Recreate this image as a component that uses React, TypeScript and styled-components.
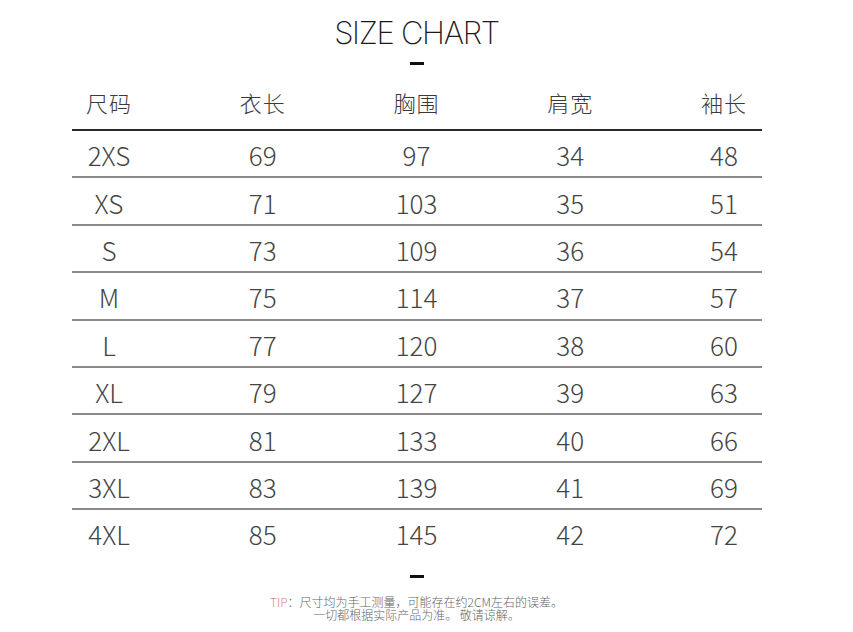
import React from "react";
import styled, { createGlobalStyle } from "styled-components";

const Global = createGlobalStyle`
  html, body { margin: 0; padding: 0; background: #fff; }
  body { width: 853px; height: 632px; overflow: hidden; }
`;

const Page = styled.div`
  width: 853px;
  height: 632px;
  box-sizing: border-box;
  padding-right: 20px;
  display: flex;
  flex-direction: column;
  align-items: center;
  background: #fff;
`;

const Title = styled.h1`
  margin: 15px 0 0 0;
  font-family: Inter, "Noto Sans", sans-serif;
  font-weight: 200;
  font-size: 31px;
  line-height: 36px;
  letter-spacing: -1.3px;
  color: #1a1a1a;
`;

const Dash = styled.div<{ $top: number }>`
  width: 14px;
  height: 3px;
  background: #111;
  margin-top: ${(p) => p.$top}px;
`;

const Table = styled.div`
  width: 690px;
  margin-top: 14px;
  display: flex;
  flex-direction: column;
  font-family: "Noto Sans CJK SC", "Noto Sans", sans-serif;
  font-weight: 200;
`;

const Row = styled.div<{ $head?: boolean; $last?: boolean }>`
  display: grid;
  grid-template-columns: repeat(5, 153.75px);
  justify-content: center;
  align-items: center;
  box-sizing: border-box;
  height: ${(p) => (p.$head ? "52px" : "47.4px")};
  padding-top: ${(p) => (p.$head ? "0" : "3px")};
  padding-bottom: ${(p) => (p.$head ? "4px" : "0")};
  border-bottom: ${(p) =>
    p.$last ? "2px solid transparent" : p.$head ? "2px solid #2a2a2a" : "2px solid #8a8a8a"};
`;

const Cell = styled.div<{ $head?: boolean }>`
  text-align: center;
  font-size: ${(p) => (p.$head ? "22px" : "26px")};
  line-height: 30px;
  color: ${(p) => (p.$head ? "#3a3a3a" : "#444")};
  letter-spacing: ${(p) => (p.$head ? "1px" : "0")};
`;

const Tip = styled.div`
  margin-top: 17px;
  font-family: "Noto Sans CJK SC", "Noto Sans", sans-serif;
  font-weight: 300;
  font-size: 12px;
  line-height: 13px;
  color: #666;
  text-align: center;
`;

const TipLabel = styled.span`
  color: #e07f86;
`;

const headers = ["尺码", "衣长", "胸围", "肩宽", "袖长"];
const rows: (string | number)[][] = [
  ["2XS", 69, 97, 34, 48],
  ["XS", 71, 103, 35, 51],
  ["S", 73, 109, 36, 54],
  ["M", 75, 114, 37, 57],
  ["L", 77, 120, 38, 60],
  ["XL", 79, 127, 39, 63],
  ["2XL", 81, 133, 40, 66],
  ["3XL", 83, 139, 41, 69],
  ["4XL", 85, 145, 42, 72],
];

export default function App() {
  return (
    <Page>
      <Global />
      <Title>SIZE CHART</Title>
      <Dash $top={11} />
      <Table>
        <Row $head>
          {headers.map((h) => (
            <Cell $head key={h}>
              {h}
            </Cell>
          ))}
        </Row>
        {rows.map((r, i) => (
          <Row key={i} $last={i === rows.length - 1}>
            {r.map((v, j) => (
              <Cell key={j}>{v}</Cell>
            ))}
          </Row>
        ))}
      </Table>
      <Dash $top={17} />
      <Tip>
        <TipLabel>TIP</TipLabel>：尺寸均为手工测量，可能存在约2CM左右的误差。
        <br />
        一切都根据实际产品为准。 敬请谅解。
      </Tip>
    </Page>
  );
}
